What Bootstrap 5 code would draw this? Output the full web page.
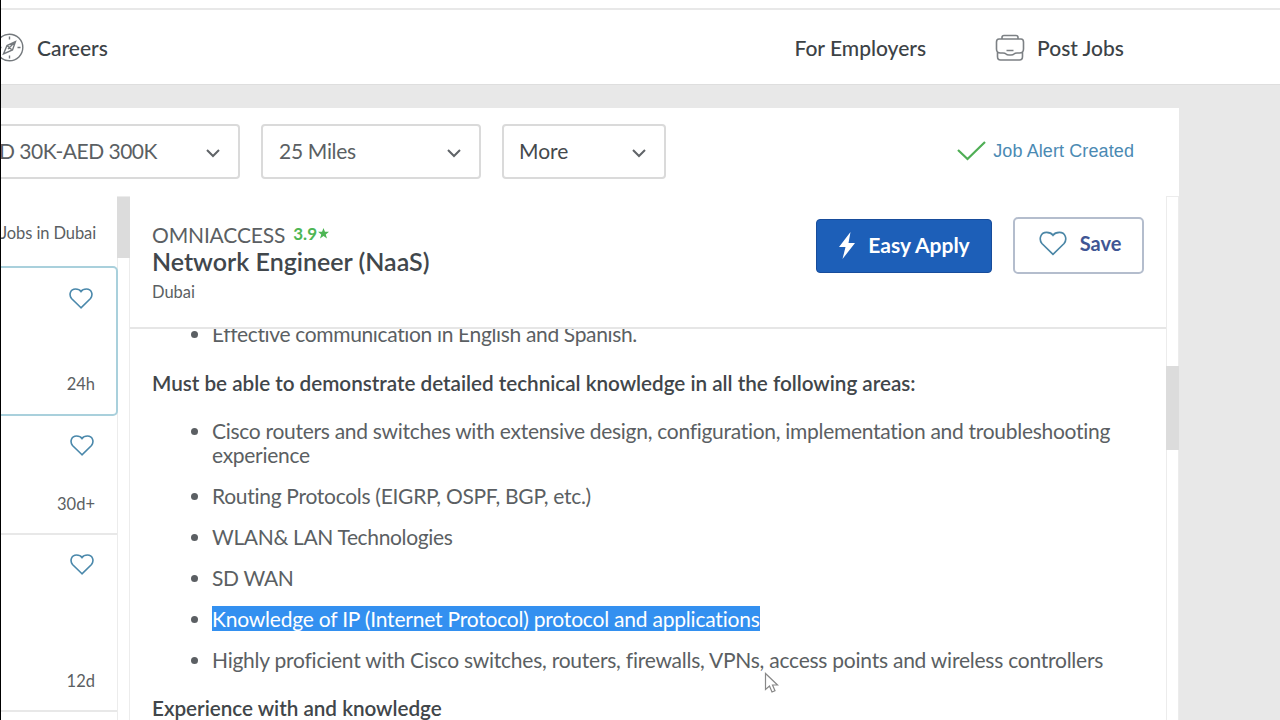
<!DOCTYPE html>
<html lang="en">
<head>
<meta charset="utf-8">
<meta name="viewport" content="width=device-width, initial-scale=1">
<title>Network Engineer (NaaS) - Jobs in Dubai</title>
<link href="https://cdn.jsdelivr.net/npm/bootstrap@5.3.0/dist/css/bootstrap.min.css" rel="stylesheet">
<style>
  body { font-family: Lato, "Liberation Sans", sans-serif; color: #5b5f63; background: #e8e8e8; height: 720px; overflow: hidden; border-left: 1px solid #000; font-size: 21px; line-height: 24px; }
  svg { display: block; flex: none; fill: none; }
  .top-strip { height: 10px; border-bottom: 2px solid #e8e8e8; }
  .site-nav { height: 75px; padding: 1px 156px 0 0; color: #3c4246; font-weight: 500; border-bottom: 1px solid #dedede; }
  .nav-compass { margin: 0 13px 0 -6px; }
  .nav-case { margin: 0 12px 0 69px; }
  .panel { width: 1178px; height: 612px; margin-top: 23px; }
  .filters { height: 88px; padding: 16px 45px 0 0; }
  .filter { height: 55px; border: 2px solid #dadada; border-radius: 4px; padding: 0 17px 1px 16px; letter-spacing: -.3px; }
  .filter-pay { width: 239px; border-left: 0; border-radius: 0 4px 4px 0; padding-left: 0; margin-right: 21px; letter-spacing: -.5px; }
  .filter-pay span { margin-left: -2px; }
  .filter-dist { width: 220px; margin-right: 21px; }
  .filter-more { width: 164px; color: #45494d; letter-spacing: 0; padding-left: 15px; }
  .alert-link2 { font: 18px/24px "Liberation Sans", sans-serif; letter-spacing: .1px; color: #4b8ab3; height: 53px; }
  .jobs { width: 116px; font-size: 16.5px; }
  .jobs-head { height: 70px; padding: 25px 21px 0 0; letter-spacing: -.1px; }
  .job { border-bottom: 2px solid #e8e8e8; padding: 0 22px 0 0; }
  .job.active { border: 2px solid #a9d0dc; border-left: 0; border-radius: 0 5px 5px 0; margin-right: -1px; position: relative; }
  .job svg { margin-right: 1px; }
  .job.active span { margin-right: -1px; }
  .rail { width: 13px; border: 1px solid #ececec; border-bottom: 0; }
  .thumb { background: #dcdcdc; margin: 0 -1px; }
  .detail { width: 1036px; }
  .detail-head { height: 133px; padding: 21px 22px 0; border-bottom: 2px solid #e6e6e6; }
  .company { height: 30px; padding-top: 6px; }
  .co-name { letter-spacing: -.15px; }
  .title { font-size: 25px; line-height: 28px; font-weight: 600; color: #41474c; margin: 0; }
  .city { font-size: 16.5px; margin-top: 5px; }
  .rating { font-size: 17px; font-weight: 700; color: #4db654; margin-top: -3px; }
  .easy { width: 176px; height: 54px; background: #1d5fb8; border: 1px solid #174c9b; border-radius: 4px; font-size: 21px; font-weight: 700; margin-top: 2px; padding-bottom: 2px !important; color: #fff; }
  .save { width: 131px; height: 57px; border: 2px solid #b4bdcd; border-radius: 5px; color: #3f5694; font-weight: 700; font-size: 20px; margin-left: 21px; padding: 0 0 5px 3px !important; }
  .desc { padding: 0 22px; }
  .desc ul { margin: 0; padding-left: 60px; }
  .desc li { line-height: 24px; margin-bottom: 17px; letter-spacing: -.29px; }
  .desc li.tight { letter-spacing: -.35px; }
  .desc li.loose { letter-spacing: -.24px; }
  .desc h2 { font-size: 20.7px; line-height: 24px; font-weight: 600; color: #41464a; margin: 0; letter-spacing: -.025px; }
  .sel { background: #3390f0; color: #fff; letter-spacing: -.21px; }
  .cursor { position: absolute; left: 764px; top: 672px; }
</style>
</head>
<body>
<div class="top-strip bg-white"></div>
<nav class="site-nav bg-white d-flex align-items-center">
  <svg class="nav-compass" width="29" height="29" viewBox="0 0 29 29" stroke="#74797d" stroke-width="1.4"><circle cx="14.5" cy="14.5" r="13.3"/><path d="M14.500 3.500v3M14.500 22.500v3M3.500 14.500h3M22.500 14.500h3M20.500 8.500l-3 8.500-9 4 3.500-8.500zM12 12.500l4.500 4M20.500 8.500L13 16"/></svg>
  <span>Careers</span>
  <span class="ms-auto">For Employers</span>
  <svg class="nav-case" width="30" height="28" viewBox="0 0 30 28" stroke="#7c8084" stroke-width="1.6"><path d="M7 5V3.500q0-2 2-2h12q2 0 2 2V5M4 5h22q2.500 0 2.500 3v7q0 4-4 4h-2.500q-2 0-3 1t-3 1h-2q-2 0-3-1t-3-1H5.500q-4 0-4-4V8q0-3 2.500-3zM2.500 18v4.500q0 3.500 3 3.500h19q3 0 3-3.500V18M11.500 16.500h7"/></svg>
  <span>Post Jobs</span>
</nav>
<main class="panel bg-white">
  <div class="filters d-flex">
    <div class="filter filter-pay d-flex align-items-center justify-content-between"><span>D 30K-AED 300K</span><svg class="mt-1" width="16" height="10" viewBox="0 0 16 10" stroke="#606468" stroke-width="2"><path d="M2 2l6 6 6-6"/></svg></div>
    <div class="filter filter-dist d-flex align-items-center justify-content-between"><span>25 Miles</span><svg class="mt-1" width="16" height="10" viewBox="0 0 16 10" stroke="#606468" stroke-width="2"><path d="M2 2l6 6 6-6"/></svg></div>
    <div class="filter filter-more d-flex align-items-center justify-content-between"><span>More</span><svg class="mt-1" width="16" height="10" viewBox="0 0 16 10" stroke="#606468" stroke-width="2"><path d="M2 2l6 6 6-6"/></svg></div>
    <div class="alert-link2 d-flex align-items-center ms-auto"><svg style="margin-right:7px" width="29" height="20" viewBox="0 0 29 20" stroke="#4fae55" stroke-width="2.200"><path d="M1 9l9.500 9L28 1"/></svg><span>Job Alert Created</span></div>
  </div>
  <div class="d-flex" style="height:524px">
    <aside class="jobs text-end">
      <div class="jobs-head text-nowrap d-flex justify-content-end">Jobs in Dubai</div>
      <div class="job active d-flex flex-column align-items-end justify-content-between" style="height:150px;padding-top:20px;padding-bottom:18px"><svg width="24" height="21" viewBox="0 0 24 21" stroke="#4a88ab" stroke-width="1.600"><path d="M12 19.800L2.500 10.500C-.5 6.500 1.500 1 6.500 1 9.500 1 11 2 12 3.500 13 2 14.500 1 17.500 1c5 0 7 5.500 4 9.500z"/></svg><span>24h</span></div>
      <div class="job d-flex flex-column align-items-end justify-content-between" style="height:119px;padding-top:19px;padding-bottom:17px"><svg width="24" height="21" viewBox="0 0 24 21" stroke="#4a88ab" stroke-width="1.600"><path d="M12 19.800L2.500 10.500C-.5 6.500 1.500 1 6.500 1 9.500 1 11 2 12 3.500 13 2 14.500 1 17.500 1c5 0 7 5.500 4 9.500z"/></svg><span>30d+</span></div>
      <div class="job d-flex flex-column align-items-end justify-content-between" style="height:177px;padding-top:19px;padding-bottom:17px"><svg width="24" height="21" viewBox="0 0 24 21" stroke="#4a88ab" stroke-width="1.600"><path d="M12 19.800L2.500 10.500C-.5 6.500 1.500 1 6.500 1 9.500 1 11 2 12 3.500 13 2 14.500 1 17.500 1c5 0 7 5.500 4 9.500z"/></svg><span>12d</span></div>
    </aside>
    <div class="rail"><div class="thumb" style="height:61px"></div></div>
    <section class="detail">
      <div class="detail-head d-flex">
        <div class="flex-grow-1">
          <div class="company d-flex align-items-center"><span class="co-name">OMNIACCESS</span><span class="rating ms-2 d-flex align-items-center">3.9<svg width="11" height="11" viewBox="0 0 12 12" style="margin-left:1px"><path fill="#4db654" d="M6 0l1.600 4H12L8.500 7 9.800 11.500 6 8.800 2.200 11.500 3.500 7 0 4h4.400z"/></svg></span></div>
          <h1 class="title">Network Engineer (NaaS)</h1>
          <div class="city">Dubai</div>
        </div>
        <button class="easy btn p-0 d-flex align-items-center justify-content-center"><svg width="18" height="29" viewBox="0 0 18 29" class="me-2"><path fill="#fff" d="M12.500 1L1 16h6.500L4.500 28 17 12h-6.500z"/></svg><span class="ms-1">Easy Apply</span></button>
        <button class="save btn d-flex align-items-center justify-content-center"><svg width="28" height="25" viewBox="0 0 24 21" stroke="#4a86a6" stroke-width="1.400"><path d="M12 19.800L2.500 10.500C-.5 6.500 1.500 1 6.500 1 9.500 1 11 2 12 3.500 13 2 14.500 1 17.500 1c5 0 7 5.500 4 9.500z"/></svg><span style="margin-left:13px">Save</span></button>
      </div>
      <div class="desc overflow-hidden" style="height:391px">
        <ul style="margin-top:-7px"><li class="tight">Effective communication in English and Spanish.</li></ul>
        <h2 style="margin:25px 0 24px">Must be able to demonstrate detailed technical knowledge in all the following areas:</h2>
        <ul>
          <li>Cisco routers and switches with extensive design, configuration, implementation and troubleshooting<br>experience</li>
          <li>Routing Protocols (EIGRP, OSPF, BGP, etc.)</li>
          <li class="tight">WLAN&amp; LAN Technologies</li>
          <li class="tight">SD WAN</li>
          <li><span class="sel">Knowledge of IP (Internet Protocol) protocol and applications</span></li>
          <li class="loose">Highly proficient with Cisco switches, routers, firewalls, VPNs, access points and wireless controllers</li>
        </ul>
        <h2 style="margin-top:24px">Experience with and knowledge</h2>
      </div>
    </section>
    <div class="rail"><div style="height:169px"></div><div class="thumb" style="height:84px"></div></div>
  </div>
</main>
<svg class="cursor" width="16" height="22" viewBox="0 0 16 22"><path d="M1.500 1.500v16l4-3.500 2.500 6 3-1.300-2.500-5.700h5z" fill="#fff" stroke="#888" stroke-width="1.200"/></svg>
<script src="https://cdn.jsdelivr.net/npm/bootstrap@5.3.0/dist/js/bootstrap.bundle.min.js"></script>
</body>
</html>
